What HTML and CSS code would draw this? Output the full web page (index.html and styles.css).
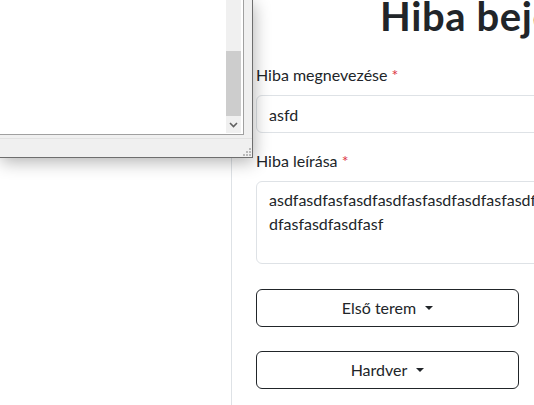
FILE: index.html
```html
<!DOCTYPE html>
<html lang="hu">
<head>
<meta charset="utf-8">
<title>Hiba bejelentés</title>
<link rel="stylesheet" href="styles.css">
</head>
<body>
<div class="page">
  <aside class="sidebar"></aside>
  <main class="main">
    <h1 class="title">Hiba bejelentés</h1>
    <form class="form">
      <div class="field">
        <label class="label" for="name">Hiba megnevezése <span class="req">*</span></label>
        <input class="control input" id="name" type="text" value="asfd">
      </div>
      <div class="field field-last">
        <label class="label" for="desc">Hiba leírása <span class="req">*</span></label>
        <textarea class="control area" id="desc">asdfasdfasfasdfasdfasfasdfasdfasfasdfasdfasfasdfasdfasfasdfasdfasf
dfasfasdfasdfasf</textarea>
      </div>
      <div class="dropdowns">
        <button class="dd" type="button">Első terem</button>
        <button class="dd" type="button">Hardver</button>
      </div>
    </form>
  </main>
</div>

<div class="window">
  <div class="win-body">
    <div class="scrollbar">
      <div class="scroll-space"></div>
      <div class="scroll-thumb"></div>
      <div class="scroll-arrow">
        <svg width="9" height="6" viewBox="0 0 9 6"><polyline points="1,1 4.5,4.5 8,1" fill="none" stroke="#606060" stroke-width="1.6"/></svg>
      </div>
    </div>
  </div>
  <div class="win-status">
    <svg class="grip" width="8" height="8" viewBox="0 0 8 8">
      <rect x="6" y="0" width="2" height="2"/>
      <rect x="3" y="3" width="2" height="2"/>
      <rect x="6" y="3" width="2" height="2"/>
      <rect x="0" y="6" width="2" height="2"/>
      <rect x="3" y="6" width="2" height="2"/>
      <rect x="6" y="6" width="2" height="2"/>
    </svg>
  </div>
</div>
</body>
</html>
```

FILE: styles.css
```css
html, body {
  margin: 0;
  padding: 0;
}

body {
  position: relative;
  width: 534px;
  height: 405px;
  overflow: hidden;
  background: #fff;
  color: #212529;
  font-family: Lato, "Liberation Sans", Arial, sans-serif;
  font-size: 16px;
  line-height: 24px;
}

.page {
  display: flex;
  height: 405px;
}

.sidebar {
  flex: none;
  width: 231px;
  border-right: 1px solid #dee2e6;
}

.main {
  flex: none;
  width: 640px;
  padding-left: 24px;
}

.title {
  margin: -8px 0 23px 124px;
  font-size: 40px;
  line-height: 48px;
  font-weight: 700;
  letter-spacing: 0.6px;
  white-space: nowrap;
}

.field {
  margin-bottom: 16px;
}

.field-last {
  margin-bottom: 25px;
}

.label {
  display: block;
  margin-bottom: 8px;
  line-height: 24px;
}

.req {
  color: #dc3545;
}

.control {
  display: block;
  box-sizing: border-box;
  width: 100%;
  margin: 0;
  padding: 6px 12px;
  font: inherit;
  line-height: 24px;
  color: #212529;
  background: #fff;
  border: 1px solid #dee2e6;
  border-radius: 6px;
}

.input {
  height: 38px;
}

.area {
  height: 83px;
  resize: none;
  overflow: hidden;
  white-space: pre;
}

.dropdowns {
  display: flex;
  flex-direction: column;
  gap: 24px;
}

.dd {
  box-sizing: border-box;
  width: 263px;
  height: 38px;
  padding: 6px 12px;
  border: 1px solid #212529;
  border-radius: 6px;
  background: #fff;
  color: #212529;
  font: inherit;
  line-height: 24px;
}

.dd::after {
  content: "";
  display: inline-block;
  margin-left: 9px;
  vertical-align: 0.255em;
  border-top: 0.28em solid;
  border-right: 0.26em solid transparent;
  border-left: 0.26em solid transparent;
}

/* overlay window */
.window {
  position: absolute;
  left: 0;
  top: 0;
  width: 252px;
  height: 157px;
  display: flex;
  flex-direction: column;
  background: #f0f0f0;
  border-right: 1px solid #6e6e6e;
  border-bottom: 1px solid #6e6e6e;
  box-shadow: 1px 4px 16px rgba(0, 0, 0, 0.3);
}

.win-body {
  box-sizing: border-box;
  flex: none;
  width: 244px;
  height: 135px;
  display: flex;
  justify-content: flex-end;
  padding: 0 2px 1px 0;
  background: #fff;
  border-right: 1px solid #a0a0a0;
  border-bottom: 1px solid #a0a0a0;
}

.scrollbar {
  width: 15px;
  display: flex;
  flex-direction: column;
  background: #f0f0f0;
}

.scroll-space {
  height: 51px;
}

.scroll-thumb {
  height: 65px;
  background: #cdcdcd;
}

.scroll-arrow {
  flex: 1;
  display: flex;
  align-items: center;
  justify-content: center;
}

.win-status {
  flex: 1;
  display: flex;
  justify-content: flex-end;
  align-items: flex-end;
  margin-top: 3px;
  padding: 0 1px 1px 0;
  border-top: 1px solid #e2e2e2;
}

.grip {
  display: block;
  fill: #b9b9b9;
}
```
